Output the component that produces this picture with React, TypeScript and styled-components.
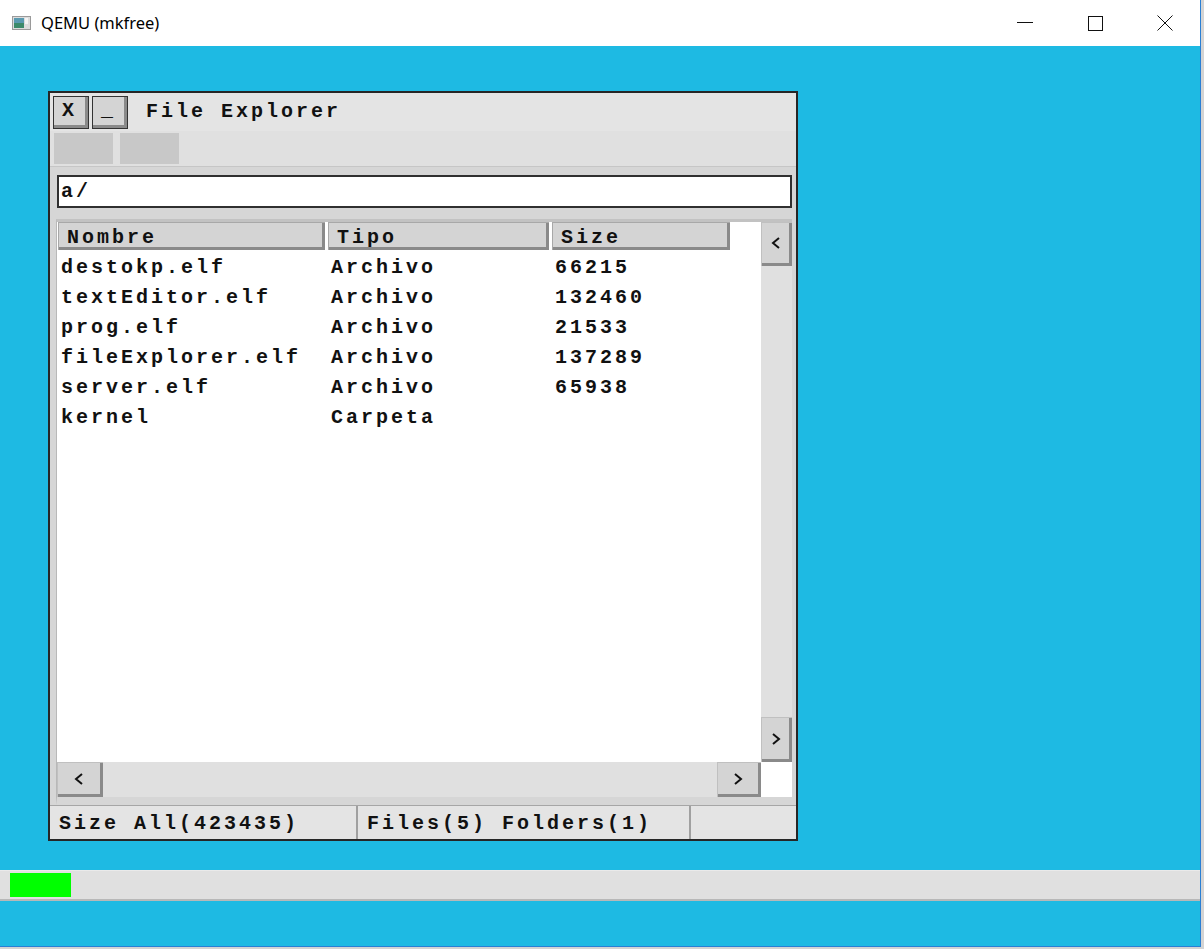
import React from "react";
import styled, { createGlobalStyle } from "styled-components";

const Global = createGlobalStyle`
  html, body { margin: 0; padding: 0; background: #d4d4d4; }
  body { font-family: "Liberation Mono", monospace; }
  * { box-sizing: border-box; }
`;

const Host = styled.div`
  width: 1201px;
  height: 947px;
  display: flex;
  flex-direction: column;
  border-right: 1px solid #2a7fd4;
  border-bottom: 1px solid #2a7fd4;
  background: #ffffff;
`;

const TitleBar = styled.div`
  height: 46px;
  flex: none;
  display: flex;
  align-items: center;
  background: #ffffff;
  font-family: "Noto Sans", "Open Sans", sans-serif;
  font-size: 16.5px;
  color: #000;
`;

const AppIcon = styled.div`
  width: 19px;
  height: 14px;
  margin: 0 10px 0 12px;
  display: flex;
`;

const TitleText = styled.span`
  flex: 1;
  margin-top: -1px;
`;

const CtrlButton = styled.div`
  width: 70px;
  height: 46px;
  display: flex;
  align-items: center;
  justify-content: center;
`;

const Desktop = styled.div`
  flex: 1;
  background: #1ebae3;
  display: flex;
  flex-direction: column;
  padding-top: 45px;
`;

const Win = styled.div`
  margin-left: 48px;
  width: 750px;
  height: 750px;
  border: 2px solid #262626;
  background: #e4e4e4;
  display: flex;
  flex-direction: column;
`;

const Mono = styled.span`
  font-family: "Liberation Mono", monospace;
  font-weight: bold;
  font-size: 20px;
  letter-spacing: 3px;
  color: #111;
  white-space: pre;
  line-height: 1;
`;

const WinTitleRow = styled.div`
  height: 38px;
  flex: none;
  display: flex;
  align-items: center;
  padding-left: 3px;
  gap: 3px;
`;

const TitleBtn = styled.div`
  width: 36px;
  height: 33px;
  border: 1px solid #333;
  background: #d4d4d4;
  box-shadow: inset -3px -3px 0 #8a8a8a;
  display: flex;
  align-items: center;
  justify-content: center;
  padding: 0 3px 2px 0;
`;

const WinTitle = styled(Mono)`
  margin-left: 15px;
  margin-top: -1px;
`;

const Toolbar = styled.div`
  height: 36px;
  flex: none;
  display: flex;
  gap: 7px;
  padding: 2px 0 0 4px;
  background: #e0e0e0;
  border-bottom: 1px solid #c6c6c6;
`;

const ToolBlock = styled.div`
  width: 59px;
  height: 31px;
  background: #c8c8c8;
`;

const AddressArea = styled.div`
  background: #d6d6d6;
  padding: 8px 4px 0 7px;
  display: flex;
  flex-direction: column;
  flex: 1;
`;

const AddressInput = styled.div`
  height: 33px;
  border: 2px solid #303030;
  background: #ffffff;
  display: flex;
  align-items: center;
  padding-left: 2px;
  flex: none;
`;

const ListPanel = styled.div`
  margin: 11px 0 0 -1px;
  height: 586px;
  flex: none;
  display: grid;
  grid-template-columns: 1fr 31px;
  grid-template-rows: 1fr 35px;
  border-top: 3px solid #c2c2c2;
  border-left: 1px solid #b8b8b8;
  border-bottom: 8px solid #d6d6d6;
`;

const ListBody = styled.div`
  background: #ffffff;
  display: flex;
  flex-direction: column;
  padding-left: 1px;
`;

const HeaderRow = styled.div`
  display: flex;
  height: 28px;
  flex: none;
  margin-bottom: 2px;
`;

const HeaderCell = styled.div<{ $w: number }>`
  width: ${(p) => p.$w}px;
  height: 28px;
  background: #d4d4d4;
  border-top: 1px solid #a8a8a8;
  border-left: 1px solid #a8a8a8;
  box-shadow: inset -3px -3px 0 #8a8a8a;
  margin-right: 3px;
  display: flex;
  align-items: center;
  padding: 3px 0 0 8px;
`;

const Row = styled.div`
  height: 30px;
  display: flex;
  align-items: center;
  padding: 2px 0 0 3px;
`;

const Cell = styled.div<{ $w?: number }>`
  width: ${(p) => (p.$w ? `${p.$w}px` : "auto")};
  flex: none;
`;

const VScroll = styled.div`
  background: #e0e0e0;
  display: flex;
  flex-direction: column;
  justify-content: space-between;
`;

const ScrollBtn = styled.div<{ $w: number; $h: number }>`
  width: ${(p) => p.$w}px;
  height: ${(p) => p.$h}px;
  background: #d4d4d4;
  border-top: 1px solid #c0c0c0;
  border-left: 1px solid #c0c0c0;
  box-shadow: inset -3px -3px 0 #8a8a8a;
  display: flex;
  align-items: center;
  justify-content: center;
  padding: 0 3px 3px 0;
  flex: none;
`;

const HScroll = styled.div`
  background: #e0e0e0;
  display: flex;
  justify-content: space-between;
`;

const Corner = styled.div`
  background: #ffffff;
`;

const StatusBar = styled.div`
  height: 34px;
  flex: none;
  display: flex;
  background: #e4e4e4;
  border-top: 1px solid #a6a6a6;
  margin: 0 -4px 0 -7px;
`;

const StatusCell = styled.div<{ $w?: number }>`
  width: ${(p) => (p.$w ? `${p.$w}px` : "auto")};
  flex: ${(p) => (p.$w ? "none" : "1")};
  display: flex;
  align-items: center;
  padding: 2px 0 0 9px;
  border-right: 2px solid #a0a0a0;
  &:last-child { border-right: none; }
`;

const Taskbar = styled.div`
  margin-top: 29px;
  height: 31px;
  background: #e0e0e0;
  border-top: 1px solid #eaeaea;
  border-bottom: 2px solid #b8b8b8;
  display: flex;
  align-items: center;
  padding-left: 10px;
`;

const StartBlock = styled.div`
  width: 61px;
  height: 24px;
  background: #00ff00;
`;

const Chevron = ({ dir }: { dir: "left" | "right" }) => (
  <svg width="10" height="14" viewBox="0 0 10 14">
    <path
      d={dir === "left" ? "M8 2 L2 7 L8 12" : "M2 2 L8 7 L2 12"}
      fill="none"
      stroke="#111"
      strokeWidth="2"
    />
  </svg>
);

const files = [
  { name: "destokp.elf", type: "Archivo", size: "66215" },
  { name: "textEditor.elf", type: "Archivo", size: "132460" },
  { name: "prog.elf", type: "Archivo", size: "21533" },
  { name: "fileExplorer.elf", type: "Archivo", size: "137289" },
  { name: "server.elf", type: "Archivo", size: "65938" },
  { name: "kernel", type: "Carpeta", size: "" },
];

export default function App() {
  return (
    <>
      <Global />
      <Host>
        <TitleBar>
          <AppIcon>
            <svg width="19" height="14" viewBox="0 0 19 14">
              <rect x="0.5" y="0.5" width="18" height="13" fill="#dcdcdc" stroke="#9a9a9a" />
              <rect x="2" y="2" width="10" height="10" fill="#3c8a6a" />
              <rect x="2" y="2" width="10" height="5" fill="#5a9ab0" />
              <rect x="13" y="2" width="3" height="6" fill="#f4f4f4" />
            </svg>
          </AppIcon>
          <TitleText>QEMU (mkfree)</TitleText>
          <CtrlButton>
            <svg width="16" height="2" viewBox="0 0 16 2">
              <rect x="0" y="0" width="16" height="1" fill="#111" />
            </svg>
          </CtrlButton>
          <CtrlButton>
            <svg width="15" height="15" viewBox="0 0 15 15">
              <rect x="0.5" y="0.5" width="14" height="14" fill="none" stroke="#111" />
            </svg>
          </CtrlButton>
          <CtrlButton>
            <svg width="16" height="16" viewBox="0 0 16 16">
              <path d="M0.5 0.5 L15.5 15.5 M15.5 0.5 L0.5 15.5" stroke="#111" strokeWidth="1" />
            </svg>
          </CtrlButton>
        </TitleBar>
        <Desktop>
          <Win>
            <WinTitleRow>
              <TitleBtn>
                <Mono>X</Mono>
              </TitleBtn>
              <TitleBtn>
                <Mono>_</Mono>
              </TitleBtn>
              <WinTitle>File Explorer</WinTitle>
            </WinTitleRow>
            <Toolbar>
              <ToolBlock />
              <ToolBlock />
            </Toolbar>
            <AddressArea>
              <AddressInput>
                <Mono>a/</Mono>
              </AddressInput>
              <ListPanel>
                <ListBody>
                  <HeaderRow>
                    <HeaderCell $w={267}>
                      <Mono>Nombre</Mono>
                    </HeaderCell>
                    <HeaderCell $w={221}>
                      <Mono>Tipo</Mono>
                    </HeaderCell>
                    <HeaderCell $w={178}>
                      <Mono>Size</Mono>
                    </HeaderCell>
                  </HeaderRow>
                  {files.map((f) => (
                    <Row key={f.name}>
                      <Cell $w={270}>
                        <Mono>{f.name}</Mono>
                      </Cell>
                      <Cell $w={224}>
                        <Mono>{f.type}</Mono>
                      </Cell>
                      <Cell>
                        <Mono>{f.size}</Mono>
                      </Cell>
                    </Row>
                  ))}
                </ListBody>
                <VScroll>
                  <ScrollBtn $w={31} $h={44}>
                    <Chevron dir="left" />
                  </ScrollBtn>
                  <ScrollBtn $w={31} $h={45}>
                    <Chevron dir="right" />
                  </ScrollBtn>
                </VScroll>
                <HScroll>
                  <ScrollBtn $w={46} $h={35}>
                    <Chevron dir="left" />
                  </ScrollBtn>
                  <ScrollBtn $w={44} $h={35}>
                    <Chevron dir="right" />
                  </ScrollBtn>
                </HScroll>
                <Corner />
              </ListPanel>
              <StatusBar>
                <StatusCell $w={308}>
                  <Mono>Size All(423435)</Mono>
                </StatusCell>
                <StatusCell $w={333}>
                  <Mono>Files(5) Folders(1)</Mono>
                </StatusCell>
                <StatusCell />
              </StatusBar>
            </AddressArea>
          </Win>
          <Taskbar>
            <StartBlock />
          </Taskbar>
        </Desktop>
      </Host>
    </>
  );
}
